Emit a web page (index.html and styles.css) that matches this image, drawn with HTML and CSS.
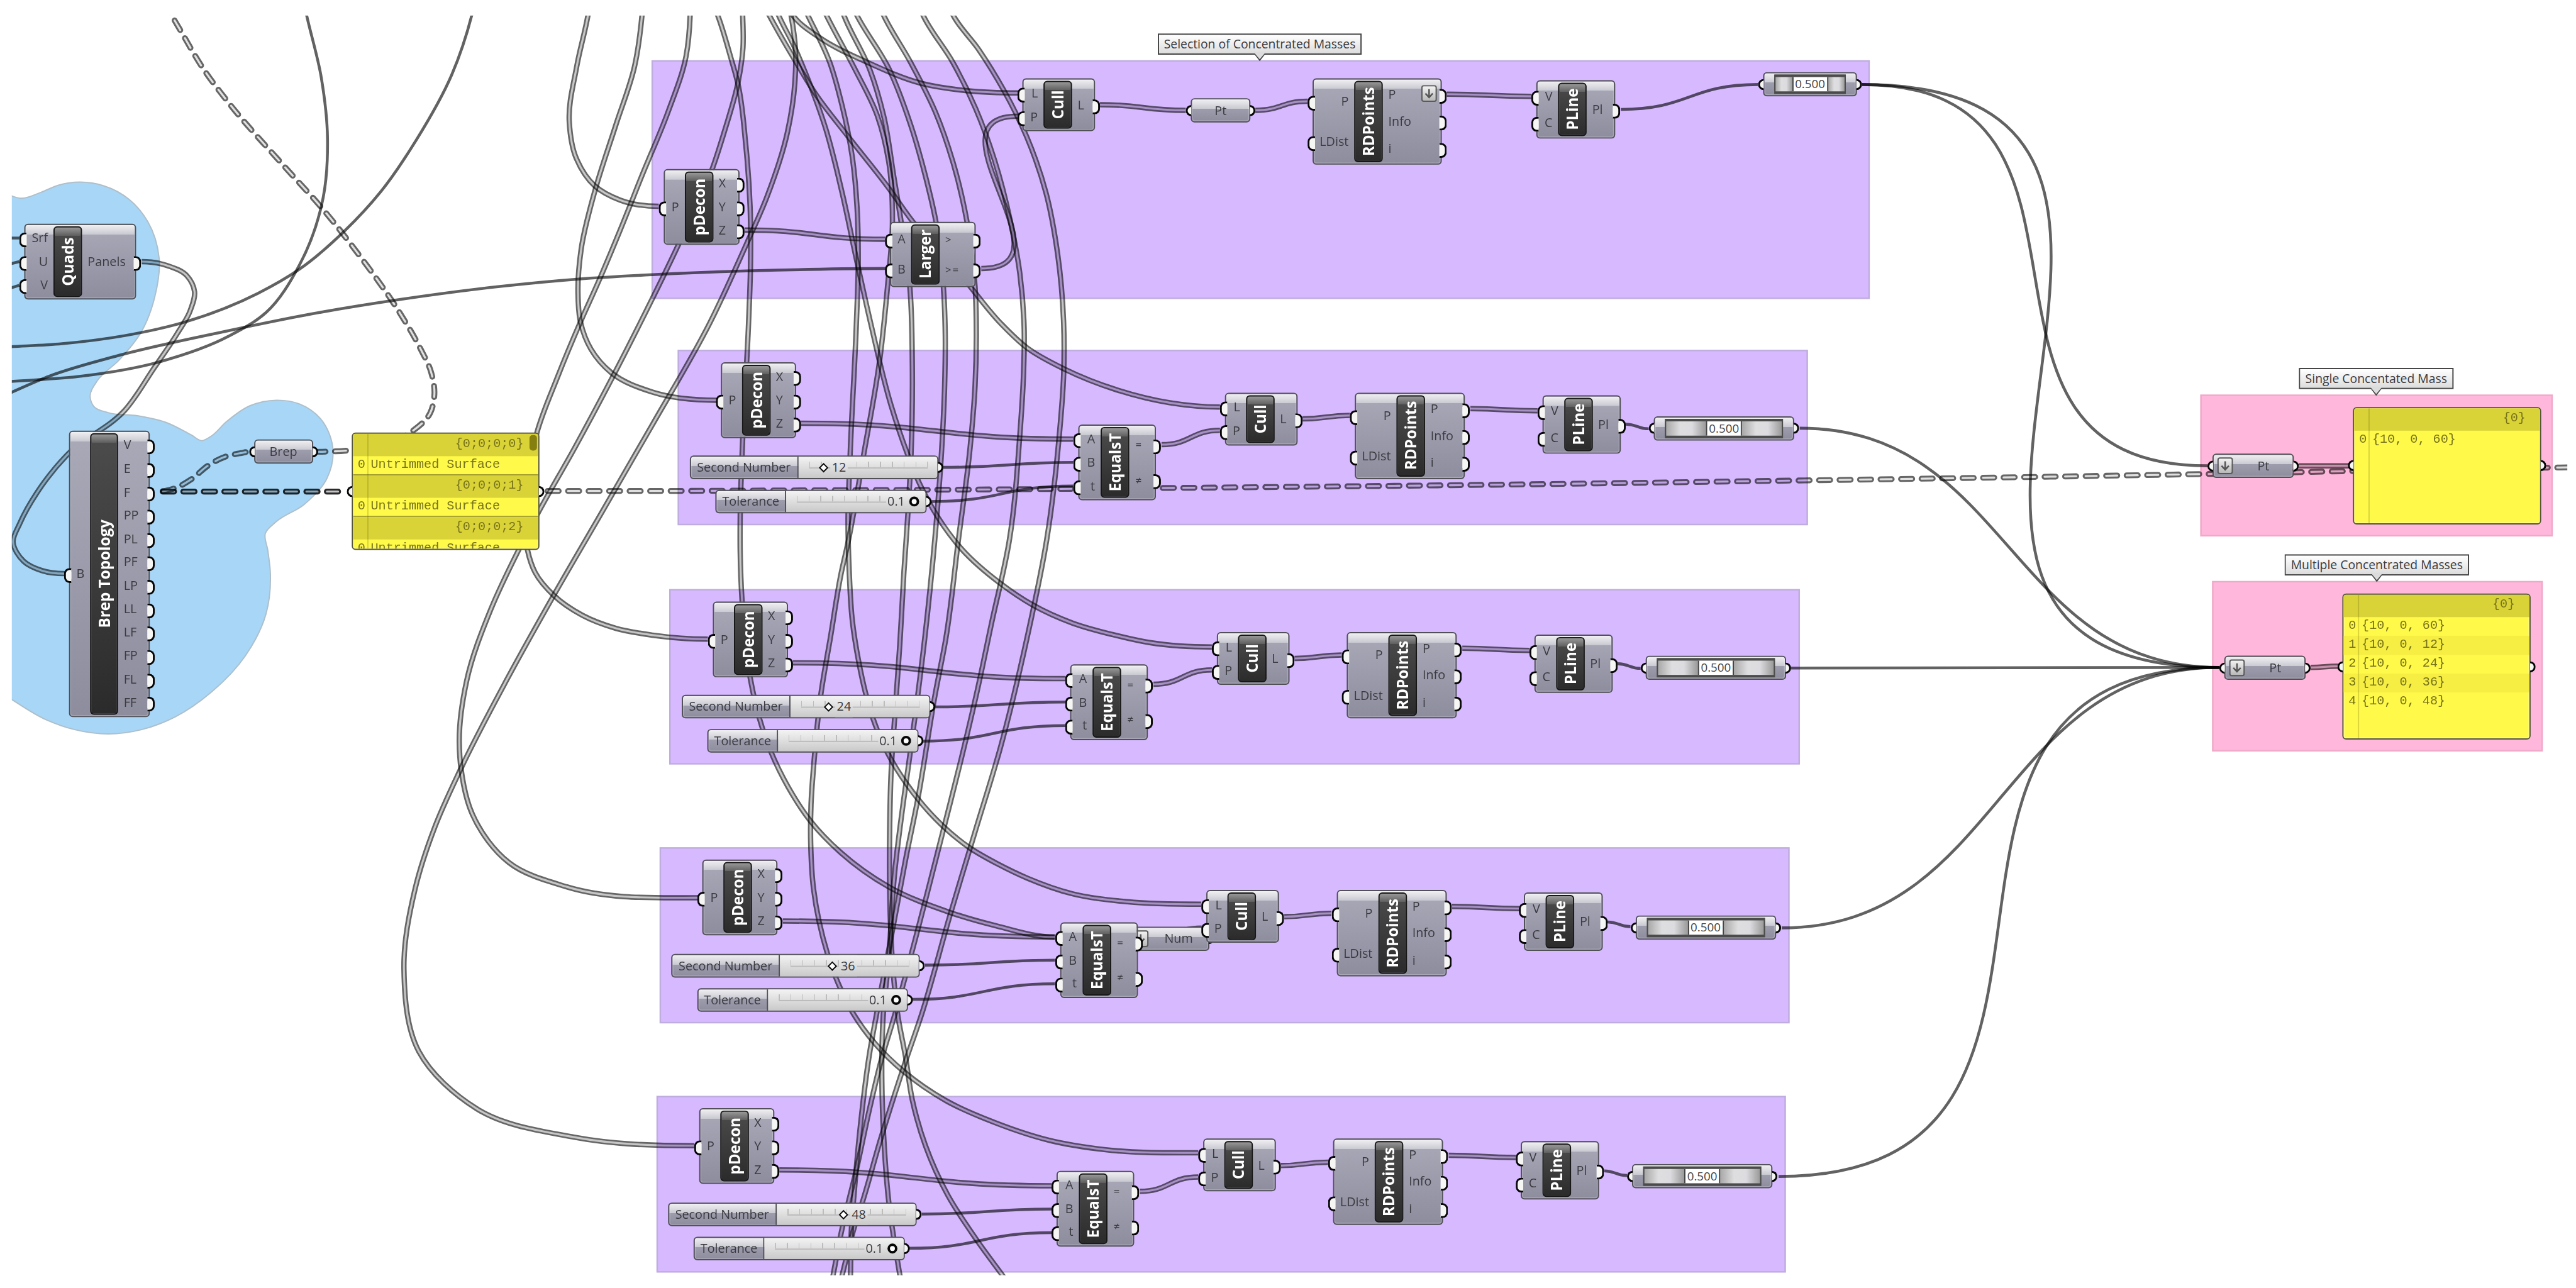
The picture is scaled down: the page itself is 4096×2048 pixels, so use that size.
FILE: index.html
```html
<!DOCTYPE html>
<html lang="en">
<head>
<meta charset="utf-8">
<title>Concentrated masses definition</title>
<link rel="stylesheet" href="styles.css">
</head>
<body>
<main class="canvas">

<svg class="wires" width="4145" height="2072" viewBox="0 0 4145 2072">
  <defs><clipPath id="view"><rect x="19" y="25" width="4112" height="2027"/></clipPath></defs>
  <g clip-path="url(#view)">
    <rect width="4145" height="2072" fill="#fff"/>
    <path class="blob" data-through="10,312 33,319 67,309 94,298 129,293 167,299 208,321 238,357 256,415 249,478 228,533 191,580 157,612 145,638 151,654 174,664 221,669 268,680 308,700 325,709 338,703 365,678 402,653 445,644 482,650 516,674 536,727 526,770 489,812 445,839 427,858 431,886 435,921 428,988 395,1055 341,1113 281,1154 228,1174 174,1181 120,1174 74,1158 10,1120"/>
    <g class="group">
      <rect x="1049.5" y="98" width="1958" height="382"/>
      <rect x="1091.5" y="564" width="1816.5" height="280"/>
      <rect x="1078" y="949" width="1817" height="280"/>
      <rect x="1062.5" y="1364.5" width="1816" height="281"/>
      <rect x="1057.5" y="1764.5" width="1815" height="282"/>
    </g>
    <g class="group pink">
      <rect x="3541.500" y="636" width="565" height="226"/>
      <rect x="3560.500" y="936" width="530" height="272"/>
    </g>

    <!-- single-item wires -->
    <g class="item">
      <path data-through="488,0 493.5,25 517,125 527,223 520,318 482,426 428,503 368,541 254,583 134,605 15,614"/>
      <path data-through="765,0 759,25 727,120 670,225 613,308 554,372 482,433 415,472 298,518 201,540 100,553 15,558"/>
      <path data-flat="end" data-through="10,635 80,605 187,573 368,532 502,505 643,482 804,461 931,449 1050,442 1201,436 1301,433.500 1428,432"/>
      <path d="M15 383H31M15 425L31 421M15 464L31 459"/>
      <path data-link="2608,176 2829,136"/>
      <path data-link="2996,136 3552,749.500" data-pull="454"/>
      <path data-link="2996,136 3571,1074" data-pull="695"/>
      <path data-link="2896,689 3571,1074"/>
      <path data-link="2882,1075 3571,1074"/>
      <path data-link="2867,1493 3571,1074"/>
      <path data-link="2862,1893 3571,1074" data-pull="598"/>
    </g>

    <!-- list wires -->
    <g class="list">
      <path data-flat="both" data-through="228,421 268,427 301,444 313,469 306,500 285,537 248,592 201,660 107,733 60,792 32,842 21,872 38,903 67,918 104,923"/>
      <path data-flat="end" data-through="950,0 946,25 928,107 916,196 927,254 957,299 998,322 1060,332"/>
      <path data-flat="end" data-through="1035,0 1033,25 1021,107 991,201 957,308 935,402 930,469 934,518 951,562 984,600 1050,631 1153,644"/>
      <path data-flat="end" data-through="1111,0 1110.500,25 1104,90 1075,180 1034,280 998,370 964,451 934,518 897,607 864,696 848,780 845,840 849,886 861,921 891,958 937,990 991,1011 1050,1022 1139,1028.500"/>
      <path data-flat="end" data-through="1194,0 1195,25 1195.500,77 1187.500,133 1167,207 1146,272 1092,393 1030,520 984,610 924,722 867,823 834,886 790,980 751,1095 739,1194 742,1238 760,1310 819,1388 912,1427 1123,1444.500"/>
      <path data-flat="end" data-through="1268,0 1273,25 1280,80 1279,133 1267,213 1234,317 1201,393 1142,520 1050,683 964,832 891,958 817,1091 741,1238 700,1330 668,1430 650,1560 674,1692 767,1784 925,1830 1117,1843.500"/>
      <path data-flat="end" data-through="1145,0 1155,25 1176,93 1187,133 1200,233 1207,333 1207.500,433 1204.500,520 1195,707 1191,833 1191,887 1194,966 1207,1090 1222,1156 1241,1211 1268,1266 1304,1321 1353,1372 1430,1427 1528,1468 1600,1489 1697,1508"/>
      <path data-flat="end" data-through="1225,0 1238,25 1278,95 1315,155 1365,220 1428,300 1469,357 1552,450 1610,520 1653,560 1713,594 1796,627 1882,648 1963,655"/>
      <path data-flat="end" data-through="1243,0 1253,25 1278,75 1295,115 1328,205 1355,310 1378,417 1401,520 1434,653 1460,730 1480,779 1509,832 1547,883 1610,939 1661,973 1727,1003 1790,1021 1850,1034 1950,1041"/>
      <path data-flat="end" data-through="1262,0 1276,25 1321,62 1395,100 1482,134 1556,146 1638,149.500"/>
      <path data-flat="end" data-through="1288,0 1300,25 1335,100 1355,170 1371,250 1379,333 1381,420 1378,520 1368,730 1364.500,840 1366.500,920 1371.500,999 1382,1066 1393,1116 1409,1168 1429,1213 1460,1263 1516,1328 1560,1364 1605,1390 1653,1413 1725,1438 1814,1451 1933,1455"/>
      <path data-flat="end" data-through="1318,0 1330,25 1375,110 1412,187 1430,260 1436,357 1428,462 1415,583 1390,730 1363,880 1354,920 1336,1027 1321,1116 1310,1223 1305,1295 1304.500,1358 1309,1430 1318,1483 1331,1533 1349,1583 1373,1631 1408,1679 1454,1724 1522,1771 1600,1806 1689,1835 1779,1850 1928,1855"/>
      <path data-through="1349,0 1358,25 1400,113 1422,187 1438,283 1450,357 1464,462 1468,587 1466,730 1460,840 1454.500,920 1448,1035 1439,1163 1434,1240 1431.500,1340 1431.500,1429 1435,1533 1445,1636 1457,1700 1468,1770 1489,1843 1525,1923 1570,1993 1613,2052 1630,2075"/>
      <path data-through="1367,0 1379,25 1430,110 1465,200 1489,283 1506,357 1518,462 1521,540 1520,620 1515,727 1504,870 1488,1027 1471,1163 1463,1223 1451,1310 1440,1400 1429,1554 1421.500,1629 1419,1697 1419.500,1767 1423,1847 1430,1933 1448,2052 1452,2075"/>
      <path data-through="1411,0 1422,25 1465,100 1505,180 1534,263 1556,357 1569,462 1571,540 1569,620 1561,720 1542,870 1522,1027 1505,1116 1476,1290 1457,1384 1436,1497 1411,1629 1400,1690 1382,1835 1375,1913 1370,1977 1368.500,2052 1368,2075"/>
      <path data-through="1475,0 1485.500,25 1533,100 1570,175 1600,257 1626,357 1641,440 1648,530 1647,600 1641,700 1624,870 1595,1005 1573,1109 1546,1224 1518,1335 1467,1533 1440,1632 1418.500,1704 1399,1785 1375,1895 1365,1935 1355,1977 1340.500,2052 1336,2075"/>
      <path data-through="1523,0 1534,25 1575,80 1615,145 1652,220 1683,310 1702,410 1711.500,520 1711.500,603 1704.500,700 1684,870 1654,1020 1610,1202 1568.500,1340 1528,1475 1483,1632 1456,1711 1417,1833 1389,1930 1374,1977 1355,2052 1349,2075"/>
      <path data-link="1198,370 1424,385"/>
      <path data-link="1579,432 1638,187" data-pull="155"/>
      <path data-link="1770,168.500 1908,177.500"/>
      <path data-link="2020,177.500 2104,163"/>
      <path data-link="2328,151.500 2464,155"/>
      <path data-link="3699,749.500 3779,749.500"/>
      <path data-link="3718,1074 3762,1072"/>
    </g>

    <!-- links repeated in every selection row -->
    <g transform="translate(1091 563.500)">
      <g id="row-links">
        <g class="list">
          <path data-link="198,117.500 636,143"/>
          <path data-link="778,152 872,129"/>
          <path data-link="1005,110.500 1081,105"/>
          <path data-link="1275,94 1383,97.500"/>
        </g>
        <g class="item">
          <path data-link="427,188.500 636,180.500"/>
          <path data-link="407,243.500 636,218.500"/>
          <path data-link="1525,119 1562,126.500"/>
        </g>
      </g>
    </g>
    <use href="#row-links" x="1078" y="949"/>
    <use href="#row-links" x="1061.500" y="1364.500"/>
    <use href="#row-links" x="1056" y="1765"/>

    <!-- tree wires -->
    <g class="tree">
      <path data-through="264,0 276.500,25 291,50 328,112 370,168 455,265 519,336 579,412 643,503 676,560 694,600 699,634 692,665 663,694 600,718 558,725 513,727"/>
      <path data-flat="both" data-through="258,790.500 280,786 308,771 335,749 362,735 388,729 401,727"/>
      <path d="M258 791H559"/>
      <path d="M258 791H559"/>
      <path data-through="877,790 1050,790 1300,789 1600,787.500 1900,785 2400,780 2904,773 3300,767 3560,762.500 3784,758 4096,752.500 4140,752"/>
    </g>
  </g>
</svg>

<!-- tree inspection -->
<section class="node quads">
  <div class="ports in"><span class="port">Srf</span><span class="port">U</span><span class="port">V</span></div>
  <div class="core"><b>Quads</b></div>
  <div class="ports out"><span class="port">Panels</span></div>
</section>
<section class="node brep-topology">
  <div class="ports in"><span class="port">B</span></div>
  <div class="core"><b>Brep Topology</b></div>
  <div class="ports out"><span class="port">V</span><span class="port">E</span><span class="port">F</span><span class="port">PP</span><span class="port">PL</span><span class="port">PF</span><span class="port">LP</span><span class="port">LL</span><span class="port">LF</span><span class="port">FP</span><span class="port">FL</span><span class="port">FF</span></div>
</section>
<section class="node param brep"><i class="grip left"></i>Brep<i class="grip right"></i></section>
<section class="panel faces">
  <i class="grip left"></i><i class="grip right"></i>
  <div class="sheet">
    <div class="path">{0;0;0;0}</div><div class="entry last"><span>0</span>Untrimmed Surface</div>
    <div class="path">{0;0;0;1}</div><div class="entry last"><span>0</span>Untrimmed Surface</div>
    <div class="path">{0;0;0;2}</div><div class="entry last"><span>0</span>Untrimmed Surface</div>
    <i class="thumb"></i>
  </div>
</section>

<!-- first selection -->
<div class="tag tag-selection">Selection of Concentrated Masses</div>
<section class="node decon decon-first">
  <div class="ports in"><span class="port">P</span></div>
  <div class="core"><b>pDecon</b></div>
  <div class="ports out"><span class="port">X</span><span class="port">Y</span><span class="port">Z</span></div>
</section>
<section class="node larger">
  <div class="ports in"><span class="port">A</span><span class="port">B</span></div>
  <div class="core"><b>Larger</b></div>
  <div class="ports out small"><span class="port">&gt;</span><span class="port">&gt;=</span></div>
</section>
<section class="node cull cull-first">
  <div class="ports in"><span class="port">L</span><span class="port">P</span></div>
  <div class="core"><b>Cull</b></div>
  <div class="ports out"><span class="port">L</span></div>
</section>
<section class="node param pt-first"><i class="grip left"></i>Pt<i class="grip right"></i></section>
<section class="node rdpoints rdpoints-first">
  <div class="ports in"><span class="port">P</span><span class="port">LDist</span></div>
  <div class="core"><b>RDPoints</b></div>
  <div class="ports out"><span class="port">P</span><span class="port">Info</span><span class="port">i</span></div>
  <svg class="flatten" viewBox="0 0 25 27"><path d="M12.500 5V21M5.500 13.500L12.500 21L19.500 13.500"/></svg>
</section>
<section class="node pline pline-first">
  <div class="ports in"><span class="port">V</span><span class="port">C</span></div>
  <div class="core"><b>PLine</b></div>
  <div class="ports out"><span class="port">Pl</span></div>
</section>
<section class="node scroller scroller-first"><i class="grip left"></i><div class="dial"><i></i><output>0.500</output><i></i></div><i class="grip right"></i></section>

<!-- equality selections -->
<article class="row row-12">
  <section class="node decon"><div class="ports in"><span class="port">P</span></div><div class="core"><b>pDecon</b></div><div class="ports out"><span class="port">X</span><span class="port">Y</span><span class="port">Z</span></div></section>
  <section class="node slider number"><label>Second Number</label><div class="rail"><i class="ticks"></i><i class="diamond"></i><output>12</output></div><i class="grip right"></i></section>
  <section class="node slider tolerance"><label>Tolerance</label><div class="rail"><i class="ticks"></i><output>0.1</output><i class="knob"></i></div><i class="grip right"></i></section>
  <section class="node equals"><div class="ports in"><span class="port">A</span><span class="port">B</span><span class="port">t</span></div><div class="core"><b>EqualsT</b></div><div class="ports out small"><span class="port">=</span><span class="port">≠</span></div></section>
  <section class="node cull"><div class="ports in"><span class="port">L</span><span class="port">P</span></div><div class="core"><b>Cull</b></div><div class="ports out"><span class="port">L</span></div></section>
  <section class="node rdpoints"><div class="ports in"><span class="port">P</span><span class="port">LDist</span></div><div class="core"><b>RDPoints</b></div><div class="ports out"><span class="port">P</span><span class="port">Info</span><span class="port">i</span></div></section>
  <section class="node pline"><div class="ports in"><span class="port">V</span><span class="port">C</span></div><div class="core"><b>PLine</b></div><div class="ports out"><span class="port">Pl</span></div></section>
  <section class="node scroller"><i class="grip left"></i><div class="dial"><i></i><output>0.500</output><i></i></div><i class="grip right"></i></section>
</article>

<article class="row row-24">
  <section class="node decon"><div class="ports in"><span class="port">P</span></div><div class="core"><b>pDecon</b></div><div class="ports out"><span class="port">X</span><span class="port">Y</span><span class="port">Z</span></div></section>
  <section class="node slider number"><label>Second Number</label><div class="rail"><i class="ticks"></i><i class="diamond"></i><output>24</output></div><i class="grip right"></i></section>
  <section class="node slider tolerance"><label>Tolerance</label><div class="rail"><i class="ticks"></i><output>0.1</output><i class="knob"></i></div><i class="grip right"></i></section>
  <section class="node equals"><div class="ports in"><span class="port">A</span><span class="port">B</span><span class="port">t</span></div><div class="core"><b>EqualsT</b></div><div class="ports out small"><span class="port">=</span><span class="port">≠</span></div></section>
  <section class="node cull"><div class="ports in"><span class="port">L</span><span class="port">P</span></div><div class="core"><b>Cull</b></div><div class="ports out"><span class="port">L</span></div></section>
  <section class="node rdpoints"><div class="ports in"><span class="port">P</span><span class="port">LDist</span></div><div class="core"><b>RDPoints</b></div><div class="ports out"><span class="port">P</span><span class="port">Info</span><span class="port">i</span></div></section>
  <section class="node pline"><div class="ports in"><span class="port">V</span><span class="port">C</span></div><div class="core"><b>PLine</b></div><div class="ports out"><span class="port">Pl</span></div></section>
  <section class="node scroller"><i class="grip left"></i><div class="dial"><i></i><output>0.500</output><i></i></div><i class="grip right"></i></section>
</article>

<article class="row row-36">
  <section class="node decon"><div class="ports in"><span class="port">P</span></div><div class="core"><b>pDecon</b></div><div class="ports out"><span class="port">X</span><span class="port">Y</span><span class="port">Z</span></div></section>
  <section class="node slider number"><label>Second Number</label><div class="rail"><i class="ticks"></i><i class="diamond"></i><output>36</output></div><i class="grip right"></i></section>
  <section class="node slider tolerance"><label>Tolerance</label><div class="rail"><i class="ticks"></i><output>0.1</output><i class="knob"></i></div><i class="grip right"></i></section>
  <section class="node param flat num"><svg class="flatten" viewBox="0 0 25 27"><path d="M12.500 5V21M5.500 13.500L12.500 21L19.500 13.500"/></svg>Num<i class="grip right"></i></section>
  <section class="node equals"><div class="ports in"><span class="port">A</span><span class="port">B</span><span class="port">t</span></div><div class="core"><b>EqualsT</b></div><div class="ports out small"><span class="port">=</span><span class="port">≠</span></div></section>
  <section class="node cull"><div class="ports in"><span class="port">L</span><span class="port">P</span></div><div class="core"><b>Cull</b></div><div class="ports out"><span class="port">L</span></div></section>
  <section class="node rdpoints"><div class="ports in"><span class="port">P</span><span class="port">LDist</span></div><div class="core"><b>RDPoints</b></div><div class="ports out"><span class="port">P</span><span class="port">Info</span><span class="port">i</span></div></section>
  <section class="node pline"><div class="ports in"><span class="port">V</span><span class="port">C</span></div><div class="core"><b>PLine</b></div><div class="ports out"><span class="port">Pl</span></div></section>
  <section class="node scroller"><i class="grip left"></i><div class="dial"><i></i><output>0.500</output><i></i></div><i class="grip right"></i></section>
</article>

<article class="row row-48">
  <section class="node decon"><div class="ports in"><span class="port">P</span></div><div class="core"><b>pDecon</b></div><div class="ports out"><span class="port">X</span><span class="port">Y</span><span class="port">Z</span></div></section>
  <section class="node slider number"><label>Second Number</label><div class="rail"><i class="ticks"></i><i class="diamond"></i><output>48</output></div><i class="grip right"></i></section>
  <section class="node slider tolerance"><label>Tolerance</label><div class="rail"><i class="ticks"></i><output>0.1</output><i class="knob"></i></div><i class="grip right"></i></section>
  <section class="node equals"><div class="ports in"><span class="port">A</span><span class="port">B</span><span class="port">t</span></div><div class="core"><b>EqualsT</b></div><div class="ports out small"><span class="port">=</span><span class="port">≠</span></div></section>
  <section class="node cull"><div class="ports in"><span class="port">L</span><span class="port">P</span></div><div class="core"><b>Cull</b></div><div class="ports out"><span class="port">L</span></div></section>
  <section class="node rdpoints"><div class="ports in"><span class="port">P</span><span class="port">LDist</span></div><div class="core"><b>RDPoints</b></div><div class="ports out"><span class="port">P</span><span class="port">Info</span><span class="port">i</span></div></section>
  <section class="node pline"><div class="ports in"><span class="port">V</span><span class="port">C</span></div><div class="core"><b>PLine</b></div><div class="ports out"><span class="port">Pl</span></div></section>
  <section class="node scroller"><i class="grip left"></i><div class="dial"><i></i><output>0.500</output><i></i></div><i class="grip right"></i></section>
</article>

<!-- results -->
<div class="tag tag-single">Single Concentated Mass</div>
<section class="node param flat pt-single"><i class="grip left"></i><svg class="flatten" viewBox="0 0 25 27"><path d="M12.500 5V21M5.500 13.500L12.500 21L19.500 13.500"/></svg>Pt<i class="grip right"></i></section>
<section class="panel single">
  <i class="grip left"></i><i class="grip right"></i>
  <div class="sheet">
    <div class="path">{0}</div>
    <div class="entry"><span>0</span>{10, 0, 60}</div>
  </div>
</section>

<div class="tag tag-multiple">Multiple Concentrated Masses</div>
<section class="node param flat pt-multiple"><i class="grip left"></i><svg class="flatten" viewBox="0 0 25 27"><path d="M12.500 5V21M5.500 13.500L12.500 21L19.500 13.500"/></svg>Pt<i class="grip right"></i></section>
<section class="panel multiple">
  <i class="grip left"></i><i class="grip right"></i>
  <div class="sheet">
    <div class="path">{0}</div>
    <div class="entry"><span>0</span>{10, 0, 60}</div>
    <div class="entry alt"><span>1</span>{10, 0, 12}</div>
    <div class="entry"><span>2</span>{10, 0, 24}</div>
    <div class="entry alt"><span>3</span>{10, 0, 36}</div>
    <div class="entry"><span>4</span>{10, 0, 48}</div>
  </div>
</section>

</main>
<script src="wires.js"></script>
</body>
</html>
```
FILE: wires.js
```js
// Turns the wire descriptions in the SVG into curves.
//   data-link="x0,y0 x1,y1"  port to port, leaving and entering horizontally
//   data-through="x,y ..."   a smooth curve through every listed point
const NS = 'http://www.w3.org/2000/svg';
const parse = text => text.trim().split(/\s+/).map(p => p.split(',').map(Number));
const r = n => Math.round(n * 100) / 100;

function link([[x0, y0], [x1, y1]], pull) {
  const d = pull || Math.abs(x1 - x0) / 2;
  return `M${x0} ${y0}C${x0 + d} ${y0} ${x1 - d} ${y1} ${x1} ${y1}`;
}

function through(pts, flat) {
  const n = pts.length;
  const len = [];
  for (let i = 0; i < n - 1; i++) {
    len.push(Math.hypot(pts[i + 1][0] - pts[i][0], pts[i + 1][1] - pts[i][1]));
  }
  const tangent = pts.map((p, i) => {
    if (i === 0) return flat === 'both' ? [1, 0] : [0, 1].map(k => (pts[1][k] - p[k]) / len[0]);
    if (i === n - 1) return flat ? [1, 0] : [0, 1].map(k => (p[k] - pts[n - 2][k]) / len[n - 2]);
    const a = len[i - 1], b = len[i];
    return [0, 1].map(k =>
      ((p[k] - pts[i - 1][k]) / a) * (b / (a + b)) + ((pts[i + 1][k] - p[k]) / b) * (a / (a + b)));
  });
  let d = `M${pts[0][0]} ${pts[0][1]}`;
  for (let i = 0; i < n - 1; i++) {
    const h = len[i] / 3, [p, q] = [pts[i], pts[i + 1]], [s, t] = [tangent[i], tangent[i + 1]];
    d += `C${r(p[0] + s[0] * h)} ${r(p[1] + s[1] * h)} ${r(q[0] - t[0] * h)} ${r(q[1] - t[1] * h)} ${q[0]} ${q[1]}`;
  }
  return d;
}

document.querySelectorAll('[data-link]').forEach(el =>
  el.setAttribute('d', link(parse(el.dataset.link), Number(el.dataset.pull))));
document.querySelectorAll('[data-through]').forEach(el =>
  el.setAttribute('d', through(parse(el.dataset.through), el.dataset.flat)));

// List and tree wires are hollow: a dark rim with a light line inside it.
document.querySelectorAll('.list > path, .tree > path').forEach(el => {
  const pair = document.createElementNS(NS, 'g');
  pair.setAttribute('class', 'hollow');
  el.replaceWith(pair);
  const inner = el.cloneNode();
  el.setAttribute('class', 'rim');
  inner.setAttribute('class', 'gap');
  pair.append(el, inner);
});
```
FILE: styles.css
```css
* { box-sizing: border-box; }
html, body { margin: 0; background: #fff; }
body {
  width: 4096px; height: 2048px; overflow: hidden;
  font: 20px/1 "Open Sans", "Noto Sans", sans-serif; color: #3a3a40;
}
i { font-style: normal; }
.canvas {
  position: relative; width: 4145px; height: 2072px;
  transform: scale(.98818); transform-origin: 0 0;
}

/* wires and groups */
.wires { position: absolute; left: 0; top: 0; display: block; }
.wires path { fill: none; }
.wires .blob { fill: #a8d6f7; stroke: #aebfca; stroke-width: 2; }
.group rect { fill: #d6b9ff; stroke: #c0addf; stroke-width: 2.5; }
.group.pink rect { fill: #ffb8dc; stroke: #efa9c8; stroke-width: 2.5; }
.item path { stroke: #626262; stroke-width: 4.6; mix-blend-mode: multiply; }
.hollow { mix-blend-mode: multiply; }
.hollow .rim { stroke: #666; stroke-width: 8.6; }
.hollow .gap { stroke: #c6c6c6; stroke-width: 3.2; }
.tree .rim { stroke-width: 9.4; }
.tree .rim, .tree .gap { stroke-linecap: round; stroke-dasharray: 18 15; stroke-dashoffset: -4; }
.tree .gap { stroke: #e0e0e0; }

/* nodes */
.node {
  position: absolute; display: flex;
  border: 2px solid #505056; border-radius: 6px;
  background:
    linear-gradient(#f0f0f2 0, #c9c9d2 15px, transparent 15px),
    linear-gradient(#a9a9b8, #8e8d9e);
  box-shadow: inset 0 0 0 1.5px rgba(255,255,255,.22);
}
.ports { display: flex; flex-direction: column; padding: 2.5px 0; }
.in { align-items: flex-end; padding-right: 9px; }
.out { flex: 1; padding-left: 9px; }
.in { flex: none; }
.port { flex: 1; width: 100%; display: flex; align-items: center; position: relative; }
.in .port { justify-content: flex-end; }
.small .port { font-size: 17px; letter-spacing: 2px; }
.core {
  flex: none; width: 46px; margin: 2px 0; display: flex; align-items: center; justify-content: center;
  border: 2px solid #161616; border-radius: 6px;
  background: linear-gradient(#989898 0, #606060 13px, transparent 13px), linear-gradient(#4c4c4c, #2b2b2b);
}
.core b {
  writing-mode: vertical-rl; transform: rotate(180deg);
  color: #fff; font-size: 24.5px; line-height: 40px; font-weight: 700; white-space: nowrap;
}
.grip, .port::after {
  content: ""; position: absolute; width: 9px; height: 18px; background: #f6f6f4; border: 3px solid #060606;
}
.grip { top: calc(50% - 9px); }
.port::after { top: calc(50% - 9px); }
.grip.left { left: -10px; }
.grip.right { right: -10px; }
.grip.left, .in .port::after { border-right: 0; border-radius: 9px 0 0 9px; }
.grip.right, .out .port::after { border-left: 0; border-radius: 0 9px 9px 0; }
.in .port::after { left: -10px; }
.out .port::after { right: -10px; }

.decon { width: 121px; height: 122px; }
.decon .in { width: 32px; }
.equals { width: 125px; height: 122px; }
.equals .in { width: 34px; }
.equals .out { padding-left: 10px; }
.cull { width: 117px; height: 85px; }
.cull .in { width: 32px; }
.rdpoints { width: 177px; height: 139px; }
.rdpoints .in { width: 65px; }
.pline { width: 126.5px; height: 94px; }
.pline .in { width: 33px; }
.scroller { width: 226px; height: 39px; }

.param { height: 39px; align-items: center; justify-content: center; }
.param.flat { width: 131px; padding-left: 33px; }
.flatten {
  position: absolute; left: 6px; top: 4px; width: 25px; height: 27px;
  border: 2px solid #5a5a5a; border-radius: 4px; background: linear-gradient(#f2f2f2, #b9b9b9);
  fill: none; stroke: #555; stroke-width: 3;
}

/* sliders */
.slider { height: 38px; }
.slider label {
  flex: none; display: flex; align-items: center; justify-content: center; border-right: 2px solid #505056;
}
.number { width: 400px; }
.number label { width: 173px; }
.tolerance { width: 339.5px; }
.tolerance label { width: 112px; }
.rail {
  flex: 1; position: relative; border-radius: 0 4px 4px 0; background: linear-gradient(#f3f3f3, #c9c9c9);
}
.ticks {
  position: absolute; left: 17px; top: 8px; width: 191px; height: 11px; border-bottom: 2px solid #bcbcbc;
  background: repeating-linear-gradient(90deg, #bcbcbc 0 1.5px, transparent 1.5px 19px);
}
.tolerance .ticks { width: 144px; }
.rail output { position: absolute; top: 0; height: 34px; line-height: 34px; font-size: 20px; }
.number output { padding: 0 3px; background: linear-gradient(#f3f3f3, #c9c9c9); }
.tolerance output { left: 163px; }
.diamond {
  position: absolute; top: 12px; width: 10.5px; height: 10.5px; margin-left: -5px;
  border: 2.5px solid #0c0c0c; background: #fff; transform: rotate(45deg);
}
.knob {
  position: absolute; left: 198px; top: 9px; width: 16px; height: 16px;
  border: 4px solid #060606; border-radius: 50%; background: #fff;
}
.row-12 .diamond { left: 40px; } .row-12 .number output { left: 51px; }
.row-24 .diamond { left: 61px; } .row-24 .number output { left: 72px; }
.row-36 .diamond { left: 84px; } .row-36 .number output { left: 95px; }
.row-48 .diamond { left: 107px; } .row-48 .number output { left: 118px; }

/* digit scrollers */
.dial {
  flex: 1; display: flex; margin: 2px 16px; border: solid #4b4b4b; border-width: 4px 2px;
  background: #555;
}
.dial i { flex: 1; background: linear-gradient(90deg, #a8a8a8, #dedee0 35%, #dcdce0 65%, #9a9a9a); }
.dial output {
  flex: none; width: 58px; border: solid #444; border-width: 0 2px; background: #fff; color: #444;
  display: flex; align-items: center; justify-content: center; font-size: 19px; line-height: 1;
}

/* value panels */
.panel {
  position: absolute; border: 2px solid #55553a; border-radius: 6px; background: #fff94a;
  font: 20.4px/1 "Liberation Mono", monospace; color: #77731a;
}
.sheet { position: relative; height: 100%; overflow: hidden; border-radius: 4px; box-shadow: inset 0 0 0 1.5px rgba(255,255,210,.5); }
.sheet::after {
  content: ""; position: absolute; left: 23px; top: 0; bottom: 0; width: 2px; background: rgba(90,85,0,.22);
}
.path { height: 36px; padding: 6px 23px 0 0; line-height: 20px; text-align: right; background: #d9d338; white-space: pre; }
.entry { display: flex; height: 30.3px; line-height: 27px; white-space: pre; }
.entry span { width: 29px; padding-left: 8px; flex: none; }
.entry.last { height: 31px; border-bottom: 2px solid #a5a02e; }
.entry.alt { background: #f6ee43; }
.thumb { position: absolute; right: 2px; top: 2px; width: 12px; height: 25px; border-radius: 5px; background: #857f10; }

/* group captions */
.tag {
  position: absolute; height: 34px; display: flex; align-items: center; justify-content: center;
  border: 2.5px solid #444; background: linear-gradient(#fff, #dcdcdc);
  font-size: 19.6px; white-space: nowrap;
}
.tag::before, .tag::after {
  content: ""; position: absolute; left: 50%; top: 100%; margin-left: -10px; width: 20px; height: 13px;
  background: #444; clip-path: polygon(0 0, 100% 0, 50% 100%);
}
.tag::after { background: #dcdcdc; height: 12px; top: calc(100% - 2px); }

/* placement on the canvas */
.quads { left: 39px; top: 360px; width: 180px; height: 121.5px; }
.quads .in { width: 45px; }
.brep-topology { left: 111px; top: 693px; width: 130px; height: 460.500px; }
.brep-topology .in { width: 32px; }
.brep-topology .core { width: 45px; }
.brep { left: 408.5px; top: 707px; width: 95px; }
.faces { left: 565.5px; top: 696px; width: 302px; height: 189px; }

.tag-selection { left: 1863px; top: 53.5px; width: 328px; }
.decon-first { left: 1067.5px; top: 271.5px; width: 122.5px; }
.larger { left: 1432px; top: 356.5px; width: 138px; height: 105px; }
.larger .in { width: 32px; }
.cull-first { left: 1645px; top: 126px; }
.pt-first { left: 1916px; top: 158px; width: 96px; }
.rdpoints-first { left: 2112px; top: 126px; width: 208px; }
.rdpoints-first .flatten { left: 173px; top: 9px; }
.pline-first { left: 2472px; top: 129px; }
.scroller-first { left: 2837px; top: 116px; width: 151px; }

.row { position: absolute; width: 1817px; height: 281px; }
.row-12 { left: 1090.5px; top: 563.5px; }
.row-24 { left: 1077.5px; top: 949px; }
.row-36 { left: 1061px; top: 1364px; }
.row-48 { left: 1055.5px; top: 1764px; }
.row .decon { left: 69px; top: 19px; }
.row .number { left: 19px; top: 169px; }
.row .tolerance { left: 60.5px; top: 224px; }
.row .equals { left: 644.5px; top: 119.5px; }
.row .cull { left: 880px; top: 68px; }
.row .rdpoints { left: 1089.5px; top: 68px; }
.row .pline { left: 1391px; top: 72px; }
.row .scroller { left: 1570.5px; top: 106px; }
.row .num { left: 753.5px; top: 126.5px; }
.row-36 .number, .row-48 .number { top: 170.5px; }
.row-36 .tolerance, .row-48 .tolerance { top: 225.5px; }
.row-36 .scroller, .row-48 .scroller { top: 109px; }

.tag-single { left: 3699px; top: 592px; width: 249px; }
.pt-single { left: 3560px; top: 730px; }
.single { left: 3786px; top: 654.5px; width: 303px; height: 189.500px; }
.tag-multiple { left: 3676px; top: 891.5px; width: 297px; }
.pt-multiple { left: 3579px; top: 1055px; }
.multiple { left: 3769px; top: 955px; width: 303px; height: 235px; }
```
